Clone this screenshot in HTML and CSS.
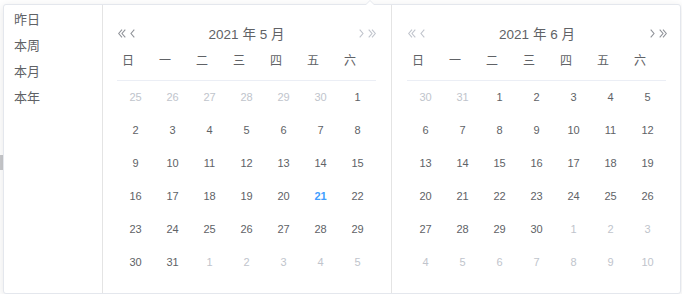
FILE: index.html
```html
<!DOCTYPE html>
<html>
	<head>
		<meta charset="UTF-8">
		<title>日期范围</title>
		<link rel="stylesheet" href="styles.css">
	</head>
	<body>
		<div class="edge"></div>
		<div class="picker">
			<div class="sidebar">
				<button type="button" class="shortcut">昨日</button>
				<button type="button" class="shortcut">本周</button>
				<button type="button" class="shortcut">本月</button>
				<button type="button" class="shortcut">本年</button>
			</div>
			<div class="content left">
				<div class="header">
					<div class="btns">
						<svg class="ico" width="8" height="9" viewBox="0 0 8 9"><path d="M4 0.7 0.7 4.5 4 8.3M7.3 0.7 4 4.5 7.3 8.3"/></svg>
						<svg class="ico" width="5" height="9" viewBox="0 0 5 9"><path d="M4.3 0.7 1 4.5 4.3 8.3"/></svg>
					</div>
					<div class="title">2021 年 5 月</div>
					<div class="btns off">
						<svg class="ico" width="5" height="9" viewBox="0 0 5 9"><path d="M0.7 0.7 4 4.5 0.7 8.3"/></svg>
						<svg class="ico" width="8" height="9" viewBox="0 0 8 9"><path d="M0.7 0.7 4 4.5 0.7 8.3M4 0.7 7.3 4.5 4 8.3"/></svg>
					</div>
				</div>
				<table class="days">
					<thead>
						<tr><th>日</th><th>一</th><th>二</th><th>三</th><th>四</th><th>五</th><th>六</th></tr>
					</thead>
					<tbody>
						<tr><td class="other">25</td><td class="other">26</td><td class="other">27</td><td class="other">28</td><td class="other">29</td><td class="other">30</td><td>1</td></tr>
						<tr><td>2</td><td>3</td><td>4</td><td>5</td><td>6</td><td>7</td><td>8</td></tr>
						<tr><td>9</td><td>10</td><td>11</td><td>12</td><td>13</td><td>14</td><td>15</td></tr>
						<tr><td>16</td><td>17</td><td>18</td><td>19</td><td>20</td><td class="today">21</td><td>22</td></tr>
						<tr><td>23</td><td>24</td><td>25</td><td>26</td><td>27</td><td>28</td><td>29</td></tr>
						<tr><td>30</td><td>31</td><td class="other">1</td><td class="other">2</td><td class="other">3</td><td class="other">4</td><td class="other">5</td></tr>
					</tbody>
				</table>
			</div>
			<div class="content right">
				<div class="header">
					<div class="btns off">
						<svg class="ico" width="8" height="9" viewBox="0 0 8 9"><path d="M4 0.7 0.7 4.5 4 8.3M7.3 0.7 4 4.5 7.3 8.3"/></svg>
						<svg class="ico" width="5" height="9" viewBox="0 0 5 9"><path d="M4.3 0.7 1 4.5 4.3 8.3"/></svg>
					</div>
					<div class="title">2021 年 6 月</div>
					<div class="btns">
						<svg class="ico" width="5" height="9" viewBox="0 0 5 9"><path d="M0.7 0.7 4 4.5 0.7 8.3"/></svg>
						<svg class="ico" width="8" height="9" viewBox="0 0 8 9"><path d="M0.7 0.7 4 4.5 0.7 8.3M4 0.7 7.3 4.5 4 8.3"/></svg>
					</div>
				</div>
				<table class="days">
					<thead>
						<tr><th>日</th><th>一</th><th>二</th><th>三</th><th>四</th><th>五</th><th>六</th></tr>
					</thead>
					<tbody>
						<tr><td class="other">30</td><td class="other">31</td><td>1</td><td>2</td><td>3</td><td>4</td><td>5</td></tr>
						<tr><td>6</td><td>7</td><td>8</td><td>9</td><td>10</td><td>11</td><td>12</td></tr>
						<tr><td>13</td><td>14</td><td>15</td><td>16</td><td>17</td><td>18</td><td>19</td></tr>
						<tr><td>20</td><td>21</td><td>22</td><td>23</td><td>24</td><td>25</td><td>26</td></tr>
						<tr><td>27</td><td>28</td><td>29</td><td>30</td><td class="other">1</td><td class="other">2</td><td class="other">3</td></tr>
						<tr><td class="other">4</td><td class="other">5</td><td class="other">6</td><td class="other">7</td><td class="other">8</td><td class="other">9</td><td class="other">10</td></tr>
					</tbody>
				</table>
			</div>
		</div>
	</body>
</html>
```

FILE: styles.css
```css
*{
	margin: 0;
	padding: 0;
	box-sizing: border-box;
}
body{
	position: relative;
	background-color: #fff;
	font-family: "Liberation Sans", "Noto Sans CJK SC", sans-serif;
	color: #606266;
}

/* 左侧露出的一小块滚动条 */
.edge{
	position: absolute;
	left: 0;
	top: 155px;
	width: 3px;
	height: 15px;
	background-color: #c8c9cc;
}

.picker{
	position: relative;
	display: flex;
	width: 678px;
	height: 290px;
	margin: 4px 0 0 3px;
	background-color: #fff;
	border: 1px solid #e4e7ed;
	border-radius: 3px;
	box-shadow: 0 2px 10px rgba(0,0,0,.1);
}
/* 弹出框的小三角 */
.picker::before,
.picker::after{
	content: '';
	position: absolute;
	left: 361px;
	width: 0;
	height: 0;
	border: 5px solid transparent;
	border-top-width: 0;
}
.picker::before{
	top: -5px;
	border-bottom-color: #e4e7ed;
}
.picker::after{
	top: -4px;
	border-bottom-color: #fff;
}

.sidebar{
	display: flex;
	flex-direction: column;
	width: 99px;
	padding-top: 2px;
	border-right: 1px solid #e4e4e4;
}
.shortcut{
	display: block;
	padding-left: 10px;
	font: 13px/26px "Liberation Sans", "Noto Sans CJK SC", sans-serif;
	color: #606266;
	text-align: left;
	background: none;
	border: 0;
	outline: none;
	cursor: pointer;
}

.content{
	width: 289px;
	padding: 14px 15px 0 14px;
}
.content.left{
	border-right: 1px solid #e4e4e4;
}
.content.right{
	width: 288px;
	padding-left: 15px;
	padding-right: 13px;
}

.header{
	display: flex;
	align-items: center;
	height: 28px;
}
.btns{
	display: flex;
	align-items: center;
	gap: 4px;
	width: 20px;
	color: #909399;
}
.btns.off{
	color: #c0c4cc;
}
.header .btns:first-child{
	padding-left: 1px;
}
.header .btns:last-child{
	justify-content: flex-end;
}
.ico{
	display: block;
	fill: none;
	stroke: currentColor;
	stroke-width: 1.1;
}
.title{
	flex: 1;
	text-align: center;
	font-size: 13.5px;
	color: #606266;
}

.days{
	width: 259px;
	border-collapse: collapse;
	table-layout: fixed;
	font-size: 11px;
}
.days th{
	padding: 6px 0 11px 5px;
	line-height: 16px;
	font-size: 12px;
	font-weight: 400;
	text-align: left;
	color: #606266;
	border-bottom: 1px solid #ebeef5;
}
.days td{
	height: 33px;
	text-align: center;
	color: #606266;
}
.days td.other{
	color: #c0c4cc;
}
.days td.today{
	color: #409eff;
	font-weight: 700;
}
```
